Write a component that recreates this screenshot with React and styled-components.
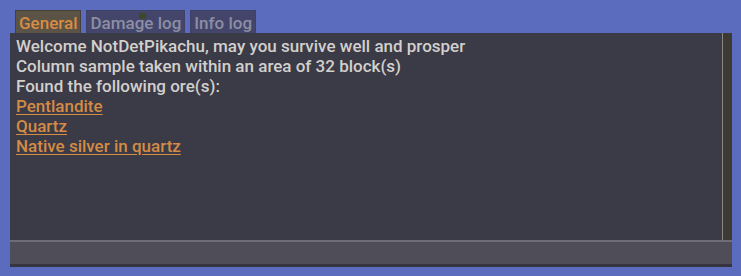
import React from "react";
import styled, { createGlobalStyle } from "styled-components";

const Global = createGlobalStyle`
  html, body { margin: 0; padding: 0; background: #5b6cbf; }
  body { font-family: Roboto, "Noto Sans", sans-serif; }
`;

const Page = styled.div`
  width: 741px;
  height: 276px;
  padding: 10px 9px 9px 10px;
  box-sizing: border-box;
  display: flex;
  flex-direction: column;
`;

const Tabs = styled.div`
  display: flex;
  gap: 5px;
  padding-left: 5px;
  height: 23px;
`;

const Tab = styled.div`
  position: relative;
  height: 23px;
  box-sizing: border-box;
  padding: 1px 3px 0;
  display: flex;
  align-items: center;
  font-size: 17px;
  font-weight: 500;
  color: ${(p) => (p.$active ? "#d88c42" : "#8c8ea4")};
  background: ${(p) => (p.$active ? "#5c5347" : "#43466a")};
  border: 1px solid ${(p) => (p.$active ? "#45403a" : "#3f4266")};
  border-bottom: none;
`;

const Marker = styled.span`
  position: absolute;
  top: 2px;
  left: 52px;
  width: 7px;
  height: 6px;
  background: #3c4a2a;
`;

const Panel = styled.div`
  flex: 1;
  display: flex;
  flex-direction: column;
  background: #3b3a47;
`;

const Body = styled.div`
  flex: 1;
  display: flex;
  min-height: 0;
`;

const Log = styled.div`
  flex: 1;
  padding: 3px 6px;
  font-size: 17px;
  font-weight: 500;
  line-height: 20px;
  color: #d2d0cc;
`;

const Line = styled.div``;

const OreLink = styled.a`
  color: #d48b44;
  text-decoration: underline;
  text-underline-offset: 2px;
`;

const Scrollbar = styled.div`
  width: 9px;
  border-left: 1px solid #8a8780;
  background: #3d3a36;
`;

const Input = styled.div`
  height: 27px;
  box-sizing: border-box;
  border-top: 2px solid #6e6d78;
  border-bottom: 3px solid #36353f;
  background: #4f4d58;
`;

export default function App() {
  return (
    <>
      <Global />
      <Page>
        <Tabs>
          <Tab $active>General</Tab>
          <Tab>
            Damage log
            <Marker />
          </Tab>
          <Tab>Info log</Tab>
        </Tabs>
        <Panel>
          <Body>
            <Log>
              <Line>Welcome NotDetPikachu, may you survive well and prosper</Line>
              <Line>Column sample taken within an area of 32 block(s)</Line>
              <Line>Found the following ore(s):</Line>
              <Line><OreLink>Pentlandite</OreLink></Line>
              <Line><OreLink>Quartz</OreLink></Line>
              <Line><OreLink>Native silver in quartz</OreLink></Line>
            </Log>
            <Scrollbar />
          </Body>
          <Input />
        </Panel>
      </Page>
    </>
  );
}
